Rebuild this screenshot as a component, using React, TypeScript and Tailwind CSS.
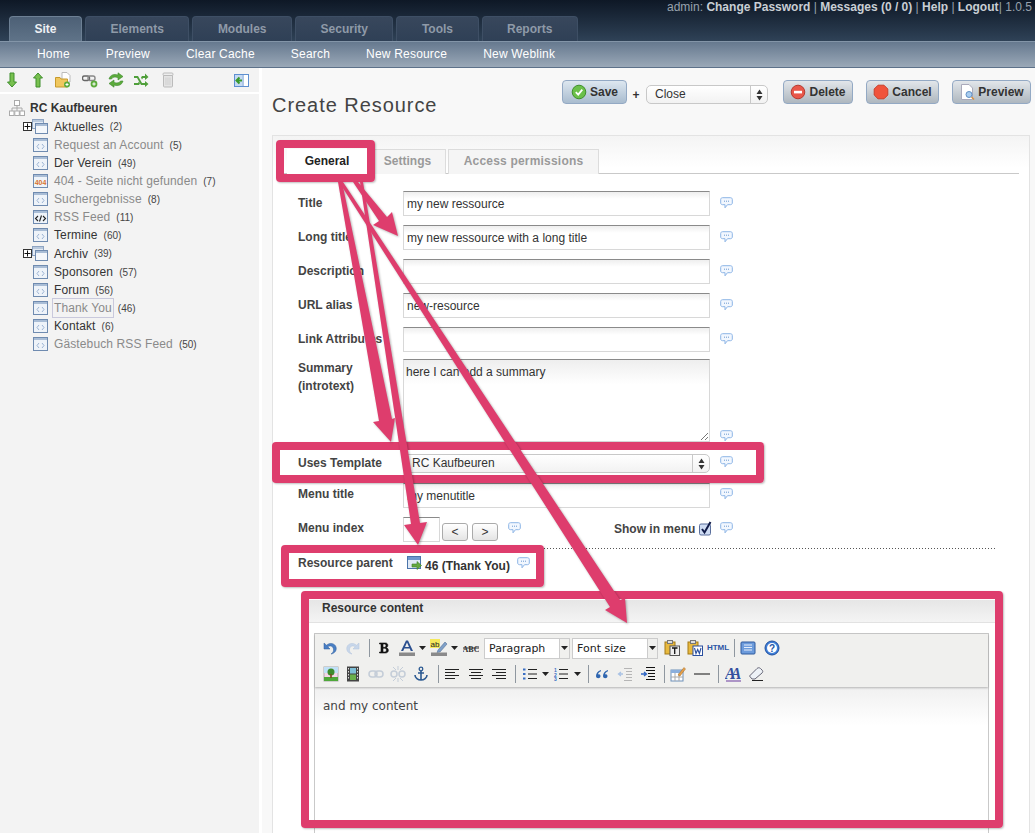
import type { ReactNode } from "react";

const Svg = ({ w = 16, h = 16, children }: { w?: number; h?: number; children: ReactNode }) => (
  <svg width={w} height={h} viewBox={`0 0 ${w} ${h}`} className="block shrink-0">
    {children}
  </svg>
);

// ---- sidebar icons
const PageIcon = ({ kind = "html" }: { kind?: "html" | "rss" | "404" }) => (
  <Svg w={15} h={14}>
    <rect x="0.5" y="0.5" width="14" height="13" fill="#eef3f9" stroke="#6f8bb0" />
    <rect x="1" y="1" width="13" height="2" fill="#a9bdd6" />
    {kind === "html" && <path d="M6 6 L4 8.5 L6 11 M9 6 L11 8.5 L9 11" fill="none" stroke="#9db4d4" strokeWidth="1" />}
    {kind === "rss" && <path d="M5 6 L2.5 8.5 L5 11 M10 6 L12.5 8.5 L10 11 M8.5 5.5 L6.5 11.5" fill="none" stroke="#222" strokeWidth="1.1" />}
    {kind === "404" && (
      <text x="7.5" y="10.5" textAnchor="middle" fontSize="7" fontWeight="700" fill="#d9742f" fontFamily="Liberation Sans">404</text>
    )}
  </Svg>
);

const FolderIcon = () => (
  <Svg w={16} h={15}>
    <rect x="0.5" y="0.5" width="11" height="9" fill="#e5ecf5" stroke="#8ea4c2" />
    <rect x="1" y="1" width="10" height="2" fill="#b9c9dd" />
    <rect x="3.5" y="4.5" width="12" height="10" fill="#f4f7fb" stroke="#6f8bb0" />
    <rect x="4" y="5" width="11" height="2" fill="#a9bdd6" />
  </Svg>
);

const Plus = () => (
  <span className="w-[9px] h-[9px] border border-[#333] bg-white flex items-center justify-center shrink-0">
    <svg width="7" height="7" viewBox="0 0 7 7" className="block"><path d="M3.5 0.5V6.5M0.5 3.5H6.5" stroke="#111" strokeWidth="1" /></svg>
  </span>
);

const RootIcon = () => (
  <Svg w={16} h={16}>
    <path d="M8 5V8M3 11V8H13V11M8 8V11" fill="none" stroke="#aaa" />
    <rect x="5.5" y="0.5" width="5" height="5" fill="#fff" stroke="#aaa" />
    <rect x="0.5" y="11" width="4.5" height="4.5" fill="#fff" stroke="#aaa" />
    <rect x="5.8" y="11" width="4.5" height="4.5" fill="#fff" stroke="#aaa" />
    <rect x="11" y="11" width="4.5" height="4.5" fill="#fff" stroke="#aaa" />
  </Svg>
);

const SideTools = () => (
  <div className="flex items-center h-[24px] bg-[#f3f3f3] pl-[4px]">
    <span className="w-[26px]"><Svg><path d="M6 1H10V10H12.5L8 15L3.5 10H6Z" fill="#78c04f" stroke="#3f8f2c" /></Svg></span>
    <span className="w-[25px]"><Svg><path d="M6 15H10V6H12.5L8 1L3.5 6H6Z" fill="#78c04f" stroke="#3f8f2c" /></Svg></span>
    <span className="w-[27px]">
      <Svg>
        <path d="M7 0.5H12L15 3.5V10H7Z" fill="#fff" stroke="#bbb" />
        <path d="M0.5 5.5H5L6 7H12.5V15H0.5Z" fill="#f0c75e" stroke="#c79a2c" />
        <circle cx="12" cy="12.5" r="3" fill="#5cab3c" />
        <path d="M10.5 12.5H13.5M12 11V14" stroke="#fff" />
      </Svg>
    </span>
    <span className="w-[26px]">
      <Svg>
        <rect x="0.5" y="4" width="7" height="4.5" rx="2" fill="none" stroke="#666" strokeWidth="1.4" />
        <rect x="6" y="4" width="7" height="4.5" rx="2" fill="none" stroke="#888" strokeWidth="1.4" />
        <circle cx="12" cy="12" r="3.4" fill="#5cab3c" />
        <path d="M10.3 12H13.7M12 10.3V13.7" stroke="#fff" />
      </Svg>
    </span>
    <span className="w-[25px]">
      <Svg>
        <path d="M1 7C2 3 6 1.5 10 3V0.8L15 4.5L10 8V5.6C7 4.6 4.5 5 3.5 7Z" fill="#5cab3c" stroke="#3c8a2c" strokeWidth="0.6" />
        <path d="M15 9C14 13 10 14.5 6 13V15.2L1 11.5L6 8V10.4C9 11.4 11.5 11 12.5 9Z" fill="#5cab3c" stroke="#3c8a2c" strokeWidth="0.6" />
      </Svg>
    </span>
    <span className="w-[27px]">
      <Svg>
        <path d="M1 4H5L9 11H12V9L15.5 12L12 15V13H8L4 6H1Z" fill="#4f9f3a" />
        <path d="M1 11H5L6 9.5L7 11.5L6 13H1ZM9 4H12V1.5L15.5 5L12 8V6H10L9 7.5L8 5.5Z" fill="#4f9f3a" />
      </Svg>
    </span>
    <span className="w-[74px]">
      <Svg>
        <rect x="3.5" y="3" width="9" height="12" rx="1" fill="#e4e4e4" stroke="#bbb" />
        <rect x="3" y="1" width="10" height="2.5" rx="1" fill="#eee" stroke="#bbb" />
        <path d="M6 5.5V13M8 5.5V13M10 5.5V13" stroke="#cfcfcf" />
      </Svg>
    </span>
    <Svg w={15} h={13}>
      <rect x="0.5" y="0.5" width="14" height="12" fill="#fff" stroke="#5e8fd0" />
      <rect x="1" y="1" width="7" height="11" fill="#c5d9f3" />
      <path d="M8 6.5H3M5.5 3.5L2.5 6.5L5.5 9.5" fill="none" stroke="#3a9a2c" strokeWidth="2" />
      <path d="M9 1V12" stroke="#5e8fd0" />
    </Svg>
  </div>
);

type TreeItem = { label: string; n: number; dim?: boolean; kind?: "html" | "rss" | "404"; folder?: boolean; sel?: boolean };

const treeItems: TreeItem[] = [
  { label: "Aktuelles", n: 2, folder: true },
  { label: "Request an Account", n: 5, dim: true },
  { label: "Der Verein", n: 49 },
  { label: "404 - Seite nicht gefunden", n: 7, dim: true, kind: "404" },
  { label: "Suchergebnisse", n: 8, dim: true },
  { label: "RSS Feed", n: 11, dim: true, kind: "rss" },
  { label: "Termine", n: 60 },
  { label: "Archiv", n: 39, folder: true },
  { label: "Sponsoren", n: 57 },
  { label: "Forum", n: 56 },
  { label: "Thank You", n: 46, dim: true, sel: true },
  { label: "Kontakt", n: 6 },
  { label: "Gästebuch RSS Feed", n: 50, dim: true },
];

const Sidebar = () => (
  <aside className="w-[259px] shrink-0 bg-[#f3f3f3] h-full">
    <SideTools />
    <div className="h-[2px] bg-white" />
    <div className="pl-[9px] pt-[5px]">
      <div className="flex items-center h-[18px] gap-[5px] text-[12px] font-bold text-[#333]">
        <RootIcon />
        RC Kaufbeuren
      </div>
      {treeItems.map((t) => (
        <div key={t.label} className={t.folder ? "flex items-center h-[19px] pl-[14px] text-[12px]" : "flex items-center h-[18px] pl-[24px] text-[12px]"}>
          {t.folder && <Plus />}
          {t.folder ? <FolderIcon /> : <PageIcon kind={t.kind} />}
          <span
            className={
              "tracking-[0.12px] " +
              (t.sel ? "border border-[#c9c9dc] px-[1px] ml-[4px] mr-[4px] " : "ml-[6px] mr-[6px] ") +
              (t.dim ? "text-[#8a8a8a]" : "text-[#333]")
            }
          >
            {t.label}
          </span>
          <span className="text-[10px] text-[#444]">({t.n})</span>
        </div>
      ))}
    </div>
  </aside>
);

// ---- form bits
const Bubble = () => (
  <svg width="13" height="12" viewBox="0 0 13 12" className="block shrink-0">
    <path d="M2.5 0.7H10.5C11.5 0.7 12.3 1.4 12.3 2.4V6C12.3 7 11.5 7.7 10.5 7.7H7.5L5 10.8V7.7H2.5C1.5 7.7 0.7 7 0.7 6V2.4C0.7 1.4 1.5 0.7 2.5 0.7Z" fill="#f2f7fe" stroke="#8db5e6" strokeWidth="1" />
    <path d="M4 4.2H5M6 4.2H7M8 4.2H9" stroke="#6b98d0" strokeWidth="1" />
  </svg>
);

const fieldClass =
  "w-[307px] border border-[#d8d8d8] border-t-[#8a8a8a] bg-gradient-to-b from-[#eeeeee] to-white to-[30%] text-[12px] text-[#333] px-[3px] flex items-center";

const Field = ({ label, value = "" }: { label: string; value?: string }) => (
  <div className="flex h-[25px] mb-[9px]">
    <label className="w-[105px] shrink-0 text-[12px] font-bold text-[#444] pt-[3px] whitespace-nowrap">{label}</label>
    <div className={fieldClass + " h-[25px]"}>{value}</div>
    <div className="ml-[10px] pt-[6px]"><Bubble /></div>
  </div>
);

const Updown = () => (
  <svg width="7" height="12" viewBox="0 0 7 12" className="block">
    <path d="M3.5 0.5L6.5 5H0.5ZM3.5 11.5L0.5 7H6.5Z" fill="#333" />
  </svg>
);

const FakeSelect = ({ value, w }: { value: string; w: string }) => (
  <div className={w + " h-[19px] flex border border-[#c8c8c8] rounded-[5px] bg-gradient-to-b from-white to-[#f2f2f2] text-[12px] text-[#333]"}>
    <span className="flex-1 pl-[8px] leading-[17px]">{value}</span>
    <span className="w-[17px] border-l border-[#c8c8c8] flex items-center justify-center"><Updown /></span>
  </div>
);

const ActionBtn = ({ icon, label, save, w }: { icon: ReactNode; label: string; save?: boolean; w: string }) => (
  <button
    className={
      w +
      " h-[24px] flex items-center justify-center gap-[3px] rounded-[4px] border border-[#93a9c4] text-[12px] font-bold text-[#333] bg-gradient-to-b " +
      (save ? "from-[#dde7f0] to-[#a9bccf]" : "from-[#e2e6ea] to-[#aeb7bf]")
    }
  >
    {icon}
    {label}
  </button>
);

// ---- TinyMCE toolbar icons
const T = ({ w, children }: { w: string; children?: ReactNode }) => (
  <span className={w + " shrink-0 flex items-center justify-center h-[20px]"}>{children}</span>
);
const Sep = ({ w }: { w: string }) => (
  <span className={w + " shrink-0 flex justify-center"}><span className="w-[1px] h-[18px] bg-[#8f979f]" /></span>
);
const Drop = () => <svg width="7" height="4" viewBox="0 0 7 4" className="block shrink-0"><path d="M0 0H7L3.5 4Z" fill="#222" /></svg>;
const Lines = ({ d, c = "#222" }: { d: string; c?: string }) => <Svg><path d={d} stroke={c} fill="none" /></Svg>;

const Row1 = () => (
  <div className="flex items-center h-[25px] pl-[5px] pt-[3px]">
    <T w="w-[20px]"><Svg><path d="M2 3V9H8L5.8 6.8C8 5 11 6 11.5 9C11.8 11 11 13 9 14C13 13.5 15 10 14 7C13 3.5 8 2 4.5 5.2Z" fill="#4a7fc4" stroke="#2f5f9f" strokeWidth="0.5" /></Svg></T>
    <T w="w-[26px]"><Svg><path d="M14 3V9H8L10.2 6.8C8 5 5 6 4.5 9C4.2 11 5 13 7 14C3 13.5 1 10 2 7C3 3.5 8 2 11.5 5.2Z" fill="#c7d6ea" stroke="#b3c5dc" strokeWidth="0.5" /></Svg></T>
    <Sep w="w-[6px]" />
    <T w="w-[24px]"><Svg><path d="M3.5 3H9.5C12.5 3 12.5 7.2 10 7.7C13.5 8.2 13 13 9.5 13H3.5V12H5V4H3.5ZM7 4V7.3H8.7C10.4 7.3 10.4 4 8.7 4ZM7 8.2V12H9C10.9 12 10.9 8.2 9 8.2Z" fill="#111" stroke="#111" strokeWidth="0.6" /></Svg></T>
    <T w="w-[22px]"><Svg w={18} h={18}><path d="M3 12L8 1.5H10L15 12H12.8L11.7 9.5H6.3L5.2 12ZM7 8H11L9 3.5Z" fill="#2a4f8f" /><rect x="1" y="13.5" width="16" height="3.5" fill="#8a8a8a" /></Svg></T>
    <T w="w-[8px]"><Drop /></T>
    <T w="w-[24px] ml-[1px]"><Svg w={18} h={18}><rect x="0" y="0" width="10" height="9" fill="#f5e95c" /><path d="M8 11L15 3L17 5L10 13L7 13.5Z" fill="#7fa0c8" stroke="#44628a" strokeWidth="0.5" /><text x="0.5" y="8" fontSize="8" fill="#222" fontFamily="Liberation Sans">ab</text><rect x="1" y="13.5" width="16" height="3.5" fill="#8a8a8a" /></Svg></T>
    <T w="w-[6px]"><Drop /></T>
    <T w="w-[27px]"><Svg w={16} h={12}><text x="8" y="9.5" textAnchor="middle" fontSize="8" fontWeight="700" fill="#333" fontFamily="Liberation Serif">ABC</text><path d="M0 6H16" stroke="#333" /></Svg></T>
    <div className="w-[86px] h-[21px] flex border border-[#cccccc] text-[11px] text-[#222] shrink-0" style={{ fontFamily: '"DejaVu Sans", sans-serif' }}>
      <span className="flex-1 bg-white pl-[4px] leading-[19px]">Paragraph</span>
      <span className="w-[10px] border-l border-[#cccccc] flex items-center justify-center"><Drop /></span>
    </div>
    <div className="w-[86px] h-[21px] flex border border-[#cccccc] text-[11px] text-[#222] ml-[2px] shrink-0" style={{ fontFamily: '"DejaVu Sans", sans-serif' }}>
      <span className="flex-1 bg-white pl-[4px] leading-[19px]">Font size</span>
      <span className="w-[10px] border-l border-[#cccccc] flex items-center justify-center"><Drop /></span>
    </div>
    <T w="w-[28px]"><Svg><rect x="1" y="2" width="10" height="12" fill="#e8b93e" stroke="#a37a17" /><rect x="3.5" y="0.5" width="5" height="3" fill="#ddd" stroke="#777" /><rect x="6" y="6" width="9.5" height="9.5" fill="#eee" stroke="#555" /><path d="M8 8H13.5M10.7 8V14" stroke="#111" strokeWidth="1.3" /></Svg></T>
    <T w="w-[18px]"><Svg><rect x="1" y="2" width="10" height="12" fill="#e8b93e" stroke="#a37a17" /><rect x="3.5" y="0.5" width="5" height="3" fill="#ddd" stroke="#777" /><rect x="6" y="6" width="9.5" height="9.5" fill="#fff" stroke="#2a4f9f" /><path d="M7.5 8L9 13.5L10.7 9.5L12.4 13.5L14 8" fill="none" stroke="#2a4f9f" strokeWidth="1.1" /></Svg></T>
    <T w="w-[28px]"><span className="text-[8px] font-bold text-[#2b55a5]">HTML</span></T>
    <Sep w="w-[4px]" />
    <T w="w-[24px]"><Svg><rect x="1" y="2" width="14" height="12" rx="1" fill="#6c9bdc" stroke="#2f5a9e" /><path d="M4 5H12M4 7.5H12M4 10H12" stroke="#e5eefb" /></Svg></T>
    <T w="w-[24px]"><Svg><circle cx="8" cy="8" r="7" fill="#3f7fd8" stroke="#1f4f9f" /><circle cx="8" cy="8" r="5" fill="#fff" /><text x="8" y="11.5" textAnchor="middle" fontSize="10" fontWeight="700" fill="#2356a8" fontFamily="Liberation Sans">?</text></Svg></T>
  </div>
);

const Row2 = () => (
  <div className="flex items-center h-[26px] pl-[5px] mt-[2px]">
    <T w="w-[22px]"><Svg><rect x="1" y="1" width="14" height="14" fill="#f4d6e8" stroke="#aaa" /><rect x="1" y="1" width="14" height="6" fill="#bfe0f7" /><rect x="1" y="11" width="14" height="4" fill="#4fa83a" /><circle cx="8" cy="6" r="3.5" fill="#3d8c2d" /><rect x="7.2" y="8" width="1.6" height="4" fill="#7a4a1f" /></Svg></T>
    <T w="w-[22px]"><Svg><rect x="2" y="0.5" width="12" height="15" fill="#444" /><rect x="5" y="2" width="6" height="5.5" fill="#7fc0d8" /><rect x="5" y="8.5" width="6" height="5.5" fill="#6ab04c" /><path d="M3.5 2V14M12.5 2V14" stroke="#ddd" strokeDasharray="1.5 1.5" /></Svg></T>
    <T w="w-[24px]"><Svg><rect x="1" y="5" width="8" height="6" rx="3" fill="none" stroke="#c4cdd8" strokeWidth="1.5" /><rect x="7" y="5" width="8" height="6" rx="3" fill="none" stroke="#c4cdd8" strokeWidth="1.5" /></Svg></T>
    <T w="w-[20px]"><Svg><rect x="1" y="5" width="6" height="6" rx="3" fill="none" stroke="#c4cdd8" strokeWidth="1.5" /><rect x="9" y="5" width="6" height="6" rx="3" fill="none" stroke="#c4cdd8" strokeWidth="1.5" /><path d="M8 0V4M8 12V16M3 1L6 4M13 1L10 4M3 15L6 12M13 15L10 12" stroke="#c4cdd8" /></Svg></T>
    <T w="w-[26px]"><Svg><circle cx="8" cy="3" r="1.8" fill="none" stroke="#2c5a92" strokeWidth="1.3" /><path d="M8 5V14M5 7H11M2 9C2 12 5 14 8 14C11 14 14 12 14 9" fill="none" stroke="#2c5a92" strokeWidth="1.6" /></Svg></T>
    <Sep w="w-[8px]" />
    <T w="w-[20px]"><Lines d="M1 3.5H15M1 6.5H11M1 9.5H15M1 12.5H11" /></T>
    <T w="w-[28px]"><Lines d="M1 3.5H15M3 6.5H13M1 9.5H15M3 12.5H13" /></T>
    <T w="w-[18px]"><Lines d="M1 3.5H15M5 6.5H15M1 9.5H15M5 12.5H15" /></T>
    <Sep w="w-[14px]" />
    <T w="w-[16px]"><Svg><path d="M6 3.5H15M6 8H15M6 12.5H15" stroke="#222" /><rect x="1" y="2.5" width="2.5" height="2" fill="#3a6fc4" /><rect x="1" y="7" width="2.5" height="2" fill="#3a6fc4" /><rect x="1" y="11.5" width="2.5" height="2" fill="#3a6fc4" /></Svg></T>
    <T w="w-[14px]"><Drop /></T>
    <T w="w-[18px]"><Svg><path d="M6 3.5H15M6 8H15M6 12.5H15" stroke="#222" /><text x="2.5" y="6" textAnchor="middle" fontSize="5" fontWeight="700" fill="#3a6fc4">1</text><text x="2.5" y="10.5" textAnchor="middle" fontSize="5" fontWeight="700" fill="#3a6fc4">2</text><text x="2.5" y="15" textAnchor="middle" fontSize="5" fontWeight="700" fill="#3a6fc4">3</text></Svg></T>
    <T w="w-[14px]"><Drop /></T>
    <Sep w="w-[8px]" />
    <T w="w-[20px]"><Svg><path d="M7 4C3.5 5 2 7.5 2 10C2 13 6.5 13 6.5 10C6.5 8 4.5 8 4 8.3C4.3 6.8 5.5 5.8 7 5.2ZM14 4C10.5 5 9 7.5 9 10C9 13 13.5 13 13.5 10C13.5 8 11.5 8 11 8.3C11.3 6.8 12.5 5.8 14 5.2Z" fill="#2f66b0" /></Svg></T>
    <T w="w-[26px]"><Svg><path d="M7 2.5H15M9 5.5H15M9 8.5H15M9 11.5H15M7 14.5H15" stroke="#b5b5b5" /><path d="M6 8H2M4 6L1.5 8L4 10" fill="none" stroke="#a9c2e4" strokeWidth="1.3" /></Svg></T>
    <T w="w-[20px]"><Svg><path d="M6 1.5H15M6 4.5H15M8 7.5H15M8 10.5H15M6 13.5H15" stroke="#111" /><path d="M1 8H6M4 6L6.5 8L4 10" fill="none" stroke="#2f66c4" strokeWidth="1.3" /></Svg></T>
    <Sep w="w-[12px]" />
    <T w="w-[16px]"><Svg><rect x="1" y="4" width="12" height="11" fill="#fff" stroke="#6c8fb8" /><rect x="1" y="4" width="12" height="3" fill="#8bafdc" /><path d="M5 7V15M9 7V15M1 11H13" stroke="#aaa" /><path d="M8 9L14 1.5L15.5 3L10 10Z" fill="#e8a04a" stroke="#a06a20" strokeWidth="0.5" /></Svg></T>
    <T w="w-[24px] ml-[4px]"><svg width="16" height="2" viewBox="0 0 16 2" className="block"><rect width="16" height="1" y="0.5" fill="#111" /></svg></T>
    <Sep w="w-[8px]" />
    <T w="w-[22px]"><Svg w={16} h={16}><text x="0" y="13" fontSize="16" fontWeight="700" fontStyle="italic" letterSpacing="-5" fill="#34509f" fontFamily="Liberation Serif">AA</text><path d="M1 15H16" stroke="#6a3a9f" /></Svg></T>
    <T w="w-[24px]"><Svg><path d="M1.5 10L9 2.5C10 1.5 11.5 1.5 12.5 2.5L14 4C15 5 15 6 14 7L7 13H4Z" fill="#eef2f7" stroke="#667" /><path d="M4 14.5H15" stroke="#222" /></Svg></T>
  </div>
);

const Editor = () => (
  <div className="ml-[36px] w-[687px]">
    <div className="h-[23px] bg-gradient-to-b from-[#e6e6e6] to-[#f4f4f4] border-b border-[#e2e2e2] text-[12px] font-bold text-[#333] pl-[13px] leading-[16px]">
      Resource content
    </div>
    <div className="ml-[5px] mr-[7px] mt-[10px] border border-[#c9c9c9] h-[400px]">
      <div className="h-[53px] bg-[#f0f0ee] shadow-[0_1px_2px_rgba(0,0,0,0.25)] relative">
        <Row1 />
        <Row2 />
      </div>
      <div
        className="h-[120px] bg-gradient-to-b from-[#f0f0f0] to-white to-[32%] px-[8px] pt-[10px] text-[12px] text-[#444]"
        style={{ fontFamily: '"DejaVu Sans", sans-serif' }}
      >
        and my content
      </div>
    </div>
  </div>
);

const tabs = [
  { label: "Site", active: true },
  { label: "Elements" },
  { label: "Modules" },
  { label: "Security" },
  { label: "Tools" },
  { label: "Reports" },
];

const subnav = ["Home", "Preview", "Clear Cache", "Search", "New Resource", "New Weblink"];

const Header = () => (
  <>
    <div className="h-[41px] bg-gradient-to-b from-[#0e1826] to-[#2f4257] relative">
      <div className="absolute right-[3px] top-0 text-[12px] text-[#98a2ad] leading-[14px]">
        admin: <b className="text-[#c9ced4]">Change Password</b> | <b className="text-[#c9ced4]">Messages (0 / 0)</b> |{" "}
        <b className="text-[#c9ced4]">Help</b> | <b className="text-[#c9ced4]">Logout</b> <span className="-ml-[3px]">| 1.0.5</span>
      </div>
      <div className="flex gap-[3px] pl-[9px] pt-[16px]">
        {tabs.map((t) => (
          <div
            key={t.label}
            className={
              "h-[25px] px-[24.5px] rounded-t-[4px] border border-b-0 text-[12px] font-bold leading-[24px] bg-gradient-to-b " +
              (t.active
                ? "border-[#6d8094] from-[#4d6076] to-[#5f7388] text-[#eef1f4]"
                : "border-[#3e4f65] from-[#38475c] to-[#2f4056] text-[#8f9aa8]")
            }
          >
            {t.label}
          </div>
        ))}
      </div>
    </div>
    <div className="h-[27px] bg-gradient-to-b from-[#66798f] to-[#9aa8b7] border-t border-t-[#8395a8] border-b border-b-[#5d7189] flex gap-[36px] pl-[37px] text-[12px] tracking-[0.2px] text-white leading-[24px]">
      {subnav.map((s) => (
        <span key={s}>{s}</span>
      ))}
    </div>
  </>
);

const Main = () => (
  <main className="flex-1 bg-[#f8f8f8] ml-[3px] min-w-0">
    <div className="flex justify-between h-[67px] pl-[10px] pr-[4px]">
      <h1 className="text-[20px] text-[#444] tracking-[0.95px] pt-[25px] leading-[24px]">Create Resource</h1>
      <div className="flex items-start pt-[12px] text-[12px] text-[#333]">
        <ActionBtn
          save
          w="w-[65px]"
          label="Save"
          icon={<Svg><circle cx="8" cy="8" r="6.8" fill="#6bc04b" stroke="#3f8f2c" /><path d="M4.8 8.2L7.2 10.6L11.3 5.6" fill="none" stroke="#fff" strokeWidth="1.8" /></Svg>}
        />
        <span className="w-[18px] text-center pt-[6px] font-bold mr-[1px]">+</span>
        <div className="pt-[5px]"><FakeSelect value="Close" w="w-[122px]" /></div>
        <div className="ml-[15px]">
          <ActionBtn
            w="w-[70px]"
            label="Delete"
            icon={<Svg><circle cx="8" cy="8" r="6.8" fill="#e8574a" stroke="#b53a30" /><rect x="4" y="6.8" width="8" height="2.6" fill="#fff" /></Svg>}
          />
        </div>
        <div className="ml-[13px]">
          <ActionBtn
            w="w-[73px]"
            label="Cancel"
            icon={<Svg><path d="M5 1.2H11L14.8 5V11L11 14.8H5L1.2 11V5Z" fill="#f0533c" stroke="#c8402c" /></Svg>}
          />
        </div>
        <div className="ml-[13px]">
          <ActionBtn
            w="w-[79px]"
            label="Preview"
            icon={<Svg><path d="M2.5 0.5H10L13.5 4V15.5H2.5Z" fill="#fff" stroke="#aab" /><circle cx="10" cy="10.5" r="3" fill="#a9cdf0" stroke="#5f8fc4" /><path d="M12.5 13L15 15.5" stroke="#d99040" strokeWidth="1.5" /></Svg>}
          />
        </div>
      </div>
    </div>

    <section className="ml-[10px] w-[758px] h-[800px] border border-[#e3e3e3] bg-gradient-to-b from-[#f4f4f4] to-white to-[4%]">
      <div className="ml-[4px] mr-[10px] mt-[13px] h-[25px] border-b border-[#c9c9c9] flex pl-[10px] text-[12px] font-bold text-[#9a9a9a]">
        <div className="w-[80px] h-[25px] bg-white text-[#222] text-center leading-[24px]">General</div>
        <div className="w-[77px] h-[25px] ml-[2px] border border-b-0 border-[#dcdcdc] bg-[#f5f5f5] text-center leading-[23px]">Settings</div>
        <div className="w-[151px] h-[25px] ml-[2px] border border-b-0 border-[#dcdcdc] bg-[#f5f5f5] text-center leading-[23px] tracking-[0.2px]">Access permissions</div>
      </div>

      <div className="pl-[25px] pt-[17px]">
        <Field label="Title" value="my new ressource" />
        <Field label="Long title" value="my new ressource with a long title" />
        <Field label="Description" />
        <Field label="URL alias" value="new-resource" />
        <Field label="Link Attributes" />

        <div className="flex -mt-[2px] h-[83px]">
          <label className="w-[105px] shrink-0 text-[12px] font-bold text-[#444] leading-[18px]">
            Summary<br />(introtext)
          </label>
          <div className={fieldClass + " h-[83px] items-start pt-[3px] !px-[2px] relative"}>
            here I can add a summary
            <svg width="9" height="9" viewBox="0 0 9 9" className="absolute right-0 bottom-0">
              <path d="M1 8L8 1M5 8L8 5" stroke="#777" />
            </svg>
          </div>
          <div className="ml-[10px] self-end"><Bubble /></div>
        </div>

        <div className="flex items-center h-[19px] mt-[12px]">
          <label className="w-[105px] shrink-0 text-[12px] font-bold text-[#444] -mt-[2px]">Uses Template</label>
          <FakeSelect value="RC Kaufbeuren" w="w-[307px]" />
          <div className="ml-[10px] -mt-[3px]"><Bubble /></div>
        </div>

        <div className="flex h-[25px] mt-[10px]">
          <label className="w-[105px] shrink-0 text-[12px] font-bold text-[#444] pt-[2px]">Menu title</label>
          <div className={fieldClass + " h-[25px]"}>my menutitle</div>
          <div className="ml-[10px] pt-[5px]"><Bubble /></div>
        </div>

        <div className="flex h-[25px] mt-[9px] w-[448px]">
          <label className="w-[105px] shrink-0 text-[12px] font-bold text-[#444] pt-[2px]">Menu index</label>
          <div className="w-[37px] h-[25px] border border-[#d8d8d8] border-t-[#8a8a8a] bg-white" />
          <div className="w-[26px] h-[18px] ml-[2px] mt-[6px] rounded-[3px] border border-[#aaa] bg-gradient-to-b from-white to-[#e4e4e4] text-[12px] text-center leading-[16px] text-[#333]">&lt;</div>
          <div className="w-[26px] h-[18px] ml-[4px] mt-[6px] rounded-[3px] border border-[#aaa] bg-gradient-to-b from-white to-[#e4e4e4] text-[12px] text-center leading-[16px] text-[#333]">&gt;</div>
          <div className="ml-[10px] pt-[5px]"><Bubble /></div>
          <label className="ml-[93px] shrink-0 text-[12px] font-bold text-[#444] pt-[3px] whitespace-nowrap">Show in menu</label>
          <div className="ml-[4px] pt-[4px] shrink-0">
            <svg width="13" height="15" viewBox="0 0 13 15" className="block">
              <rect x="0.5" y="3" width="11" height="11" rx="1.5" fill="#cfdcf3" stroke="#5a6f9c" />
              <path d="M3 8L5.5 11.5L11.5 1" fill="none" stroke="#111b48" strokeWidth="2" />
            </svg>
          </div>
          <div className="ml-[8px] pt-[5px] shrink-0"><Bubble /></div>
        </div>
      </div>

      <div className="mt-[6px] ml-[10px] mr-[34px] h-[1px] bg-[repeating-linear-gradient(to_right,#555_0_1px,transparent_1px_3px)]" />

      <div className="flex pl-[25px] pt-[7px] h-[51px]">
        <label className="w-[109px] shrink-0 text-[12px] font-bold text-[#444] leading-[14px]">Resource parent</label>
        <Svg w={15} h={15}>
          <rect x="0.5" y="0.5" width="13" height="12" fill="#dfe9f5" stroke="#4a74aa" />
          <rect x="1" y="1" width="12" height="3" fill="#6c97cd" />
          <path d="M5 8H10V5.5L14.5 9.5L10 13.5V11H5Z" fill="#63a83f" stroke="#3c7d25" strokeWidth="0.6" />
        </Svg>
        <b className="ml-[3px] mt-[3px] text-[12px] text-[#333] leading-[14px]">46 (Thank You)</b>
        <div className="ml-[7px] mt-[1px]"><Bubble /></div>
      </div>

      <Editor />
    </section>
  </main>
);

// annotation boxes drawn on top of the screenshot
const boxClass = "absolute border-[8px] border-[#de3d6d] rounded-[4px] shadow-[1px_1px_2px_rgba(0,0,0,0.25)] pointer-events-none";

const Annotations = () => (
  <>
    <div className={boxClass + " left-[276px] top-[140px] w-[99px] h-[42px]"} />
    <div className={boxClass + " left-[272px] top-[442px] w-[492px] h-[41px]"} />
    <div className={boxClass + " left-[281px] top-[545px] w-[263px] h-[42px]"} />
    <div className={boxClass + " left-[301px] top-[591px] w-[702px] h-[237px]"} />
    <svg width="1035" height="833" viewBox="0 0 1035 833" className="absolute left-0 top-0 pointer-events-none drop-shadow-[1px_1px_1px_rgba(0,0,0,0.3)]">
      <g fill="#de3d6d">
        {/* General -> Long title */}
        <polygon points="353,182 358,182 387,217 392,212 398,236 373,225 379,221" />
        {/* General -> Uses Template */}
        <polygon points="338,182 342,182 392,419 395,418 391,442 373,422 379,421" />
        {/* General -> Resource parent */}
        <polygon points="360,182 363,182 420,523 427,522 418,545 404,525 411,524" />
        {/* General -> Resource content */}
        <polygon points="339,182 343,182 620,600 625,598 627,623 605,610 610,607" />
      </g>
    </svg>
  </>
);

export default function App() {
  return (
    <div className="relative w-[1035px] h-[833px] overflow-hidden bg-white text-[#333]" style={{ fontFamily: '"Liberation Sans", Arial, sans-serif' }}>
      <Header />
      <div className="flex h-[765px]">
        <Sidebar />
        <Main />
      </div>
      <Annotations />
    </div>
  );
}
